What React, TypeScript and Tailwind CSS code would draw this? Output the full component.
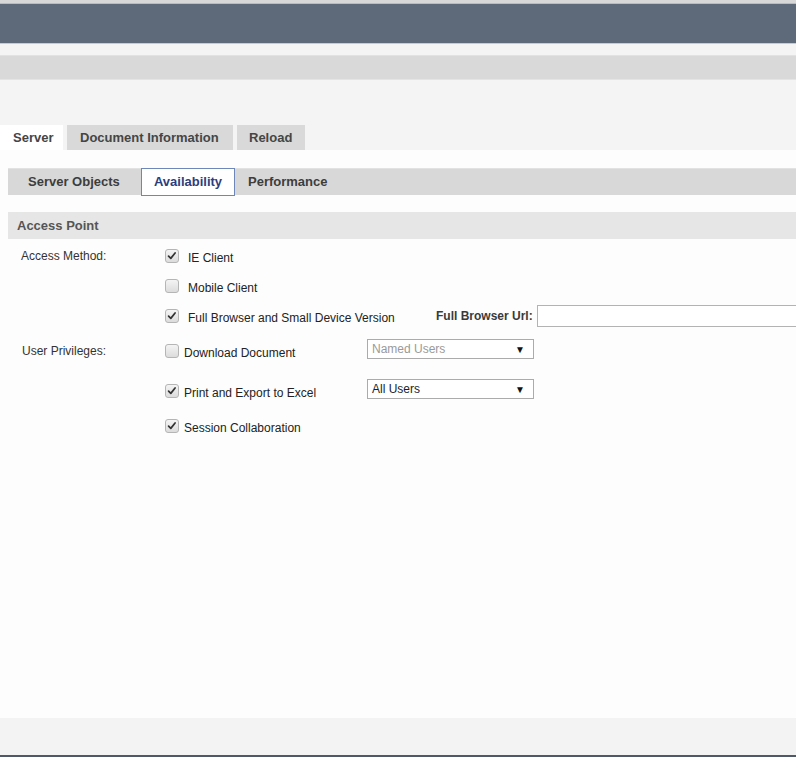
import React from 'react';

function Check({ checked }: { checked: boolean }) {
  return (
    <span className="relative inline-block w-[14px] h-[14px] shrink-0 rounded-[3px] border border-[#b5b5b5] bg-gradient-to-b from-[#f4f4f4] to-[#dcdcdc]">
      {checked && (
        <svg viewBox="0 0 14 14" className="absolute left-0 top-0 w-[12px] h-[12px]">
          <path d="M3 7.2 L5.6 9.8 L10.6 3.4" fill="none" stroke="#333" strokeWidth="2" strokeLinecap="round" strokeLinejoin="round" />
        </svg>
      )}
    </span>
  );
}

function Select({ value, muted }: { value: string; muted?: boolean }) {
  return (
    <div className="flex items-center justify-between w-[167px] h-[20px] border border-[#ababab] bg-white pl-[4px] pr-[8px] text-[12px]">
      <span className={muted ? 'text-[#9a9a9a]' : 'text-[#1c1c2c]'}>{value}</span>
      <span className="text-[10px] text-[#111]">▼</span>
    </div>
  );
}

export default function App() {
  return (
    <div className="w-[796px] h-[757px] flex flex-col overflow-hidden bg-white font-['Liberation_Sans',Arial,sans-serif] text-[#222]">
      <div className="h-[4px] bg-[#d8d8d8] border-b border-[#bcbcbc]" />
      <div className="h-[40px] bg-[#5e6a7a] border-b border-[#c6cbd2]" />
      <div className="h-[11px] bg-[#f4f4f4]" />
      <div className="h-[25px] bg-[#d9d9d9] border-t border-[#e2e2e2] border-b border-b-[#e4e4e4]" />

      <div className="h-[70px] bg-[#f4f4f4] flex items-end gap-[4px] text-[13px] font-bold text-[#454545]">
        <div className="h-[25px] w-[63px] bg-white pl-[13px] flex items-center">Server</div>
        <div className="h-[25px] w-[166px] bg-[#d9d9d9] pl-[13px] flex items-center">Document Information</div>
        <div className="h-[25px] w-[68px] bg-[#d9d9d9] pl-[12px] flex items-center">Reload</div>
      </div>

      <div className="flex-1 bg-[#fdfdfd] flex flex-col">
        <div className="mt-[18px] ml-[8px] h-[27px] bg-[#d8d8d8] border-t border-[#e2e2e2] flex items-start text-[13px] font-bold text-[#3d3d3d]">
          <div className="h-[26px] w-[133px] pl-[20px] flex items-center">Server Objects</div>
          <div className="h-[28px] -mt-[1px] w-[94px] bg-white border border-[#6f86b8] flex items-center justify-center text-[#2e3d7c]">Availability</div>
          <div className="h-[26px] pl-[13px] flex items-center">Performance</div>
        </div>

        <div className="mt-[17px] ml-[8px] h-[27px] bg-[#e6e6e6] pl-[9px] flex items-center text-[13px] font-bold text-[#555]">
          Access Point
        </div>

        <div className="text-[12px] whitespace-nowrap">
          <div className="flex items-center h-[30px] mt-[2px]">
            <div className="w-[165px] shrink-0 pl-[21px] text-[#333]">Access Method:</div>
            <Check checked />
            <span className="ml-[9px] mt-[4px]">IE Client</span>
          </div>
          <div className="flex items-center h-[30px]">
            <div className="w-[165px] shrink-0" />
            <Check checked={false} />
            <span className="ml-[9px] mt-[4px]">Mobile Client</span>
          </div>
          <div className="flex items-center h-[30px] overflow-hidden">
            <div className="w-[165px] shrink-0" />
            <div className="w-[271px] shrink-0 flex items-center">
              <Check checked />
              <span className="ml-[9px] mt-[4px]">Full Browser and Small Device Version</span>
            </div>
            <span className="shrink-0 font-bold text-[#3a3a3a]">Full Browser Url:</span>
            <div className="ml-[4px] w-[300px] h-[22px] border border-[#b3b3b3] bg-white shrink-0" />
          </div>

          <div className="flex items-center h-[30px] mt-[5px]">
            <div className="w-[165px] shrink-0 pl-[22px] text-[#333]">User Privileges:</div>
            <div className="w-[202px] shrink-0 flex items-center">
              <Check checked={false} />
              <span className="ml-[5px] mt-[4px]">Download Document</span>
            </div>
            <div className="-mt-[4px]">
              <Select value="Named Users" muted />
            </div>
          </div>
          <div className="flex items-center h-[30px] mt-[10px]">
            <div className="w-[165px] shrink-0" />
            <div className="w-[202px] shrink-0 flex items-center">
              <Check checked />
              <span className="ml-[5px] mt-[4px]">Print and Export to Excel</span>
            </div>
            <div className="-mt-[4px]">
              <Select value="All Users" />
            </div>
          </div>
          <div className="flex items-center h-[30px] mt-[5px]">
            <div className="w-[165px] shrink-0" />
            <Check checked />
            <span className="ml-[5px] mt-[4px]">Session Collaboration</span>
          </div>
        </div>
      </div>

      <div className="h-[37px] bg-[#f3f3f3]" />
      <div className="h-[2px] bg-[#4f5866]" />
    </div>
  );
}
